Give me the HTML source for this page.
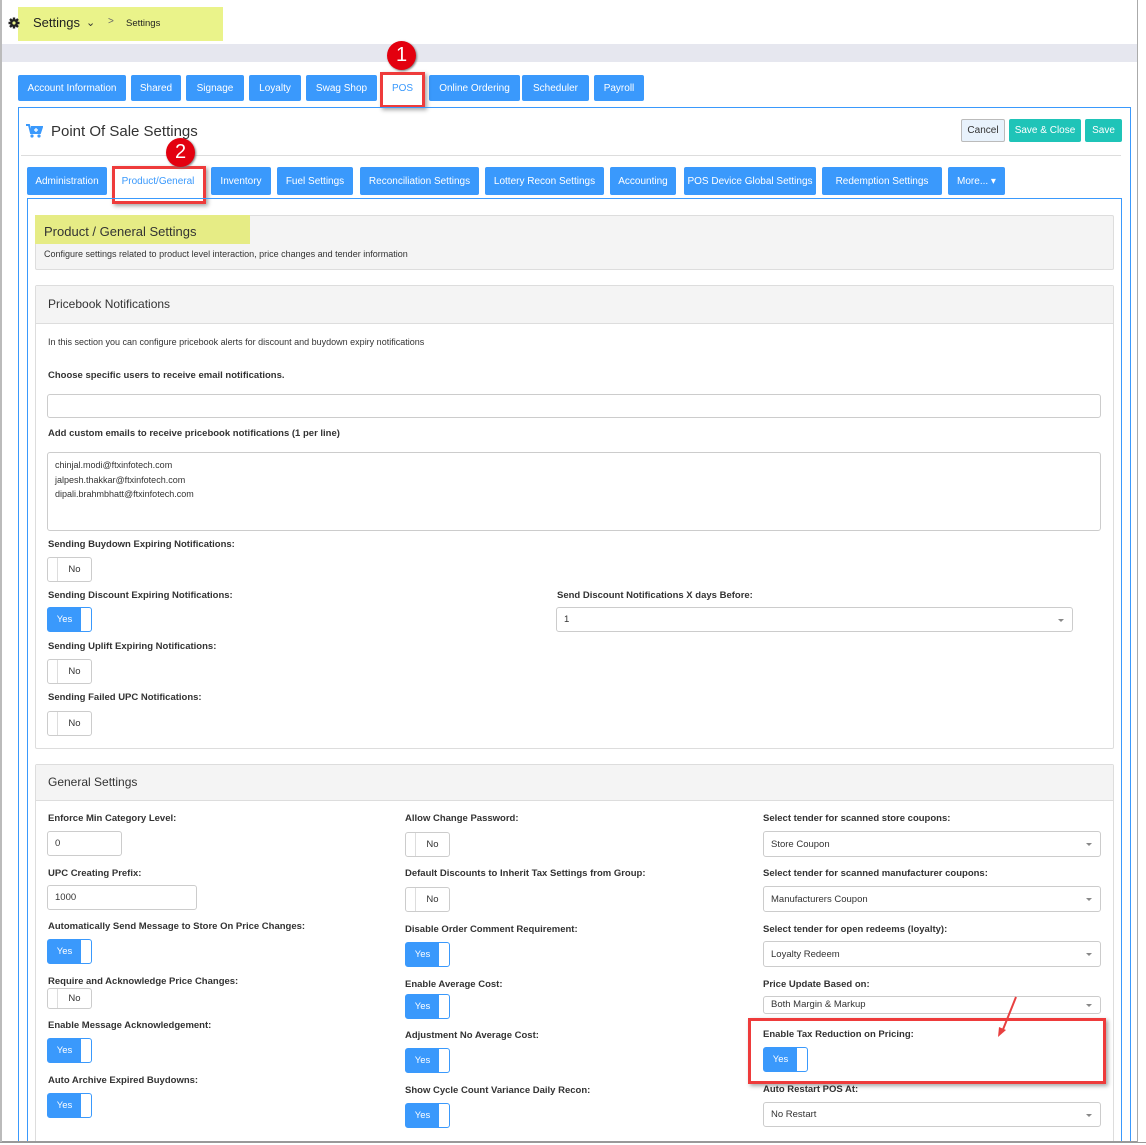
<!DOCTYPE html>
<html><head><meta charset="utf-8"><style>
*{box-sizing:border-box;margin:0;padding:0}
html,body{width:1146px;height:1145px;overflow:hidden}
body{background:#fff;font-family:"Liberation Sans",sans-serif;color:#333}
#w{position:relative;width:1146px;height:1145px;overflow:hidden}
.a{position:absolute}
.btn{position:absolute;background:#3a99fc;color:#fff;font-size:10px;border-radius:2px;display:flex;align-items:center;justify-content:center;white-space:nowrap}
.lbl{position:absolute;font-size:9.5px;font-weight:bold;color:#333;white-space:nowrap}
.in{position:absolute;border:1px solid #ccc;border-radius:3px;background:#fff;font-size:9.5px;color:#333;display:flex;align-items:center;padding-left:7px}
.sel::after{content:"";position:absolute;right:8px;top:50%;margin-top:-1px;border:3px solid transparent;border-top:3px solid #888}
.tn{position:absolute;width:45px;height:25px;border:1px solid #ccc;border-radius:3px;background:#fff;font-size:9.5px}
.tn::before{content:"";position:absolute;left:9px;top:0;bottom:0;border-left:1px solid #ddd}
.tn span{position:absolute;left:10px;right:0;top:0;bottom:0;display:flex;align-items:center;justify-content:center}
.ty{position:absolute;width:45px;height:25px;border:1px solid #3a99fc;border-radius:3px;background:#3a99fc;color:#fff;font-size:9.5px}
.ty span{position:absolute;left:0;right:10px;top:0;bottom:0;display:flex;align-items:center;justify-content:center}
.ty::after{content:"";position:absolute;right:0;top:0;bottom:0;width:10px;background:#fff;border-radius:0 2px 2px 0}
.panel{position:absolute;border:1px solid #ddd;border-radius:2px;background:#fff}
.ph{position:absolute;left:0;right:0;top:0;background:#f4f4f4;border-bottom:1px solid #ddd}
.badge{position:absolute;width:29px;height:29px;border-radius:50%;background:#e3000f;color:#fff;font-size:20px;display:flex;align-items:center;justify-content:center;box-shadow:1px 1px 2px #777}
.red{position:absolute;border:3px solid #ee3b3b;box-shadow:2px 2px 4px rgba(0,0,0,.35)}
</style></head><body><div id="w">
<div class="a" style="left:2px;top:44px;width:1136px;height:18px;background:#e6e7ef"></div>
<div class="a" style="left:18px;top:7px;width:205px;height:34px;background:#eaf38a"></div>
<svg class="a" style="left:8px;top:17px" width="12" height="12" viewBox="0 0 12 12"><circle cx="6" cy="6" r="4" fill="#222"/><g stroke="#222" stroke-width="2.4"><line x1="6" y1="0.5" x2="6" y2="11.5"/><line x1="0.5" y1="6" x2="11.5" y2="6"/><line x1="2" y1="2" x2="10" y2="10"/><line x1="10" y1="2" x2="2" y2="10"/></g><circle cx="6" cy="6" r="1.6" fill="#eaf38a"/></svg>
<div class="a" style="left:33px;top:15px;font-size:13px;color:#222">Settings</div>
<div class="a" style="left:86px;top:16px;font-size:11px;color:#333">⌄</div>
<div class="a" style="left:108px;top:16px;font-size:10px;color:#666">&gt;</div>
<div class="a" style="left:126px;top:18px;font-size:9.5px;color:#222">Settings</div>

<div class="btn" style="left:18px;top:75px;width:108px;height:26px">Account Information</div>
<div class="btn" style="left:131px;top:75px;width:50px;height:26px">Shared</div>
<div class="btn" style="left:186px;top:75px;width:58px;height:26px">Signage</div>
<div class="btn" style="left:249px;top:75px;width:52px;height:26px">Loyalty</div>
<div class="btn" style="left:306px;top:75px;width:71px;height:26px">Swag Shop</div>
<div class="btn" style="left:383px;top:75px;width:39px;height:26px;background:#fff;color:#3a99fc">POS</div>
<div class="btn" style="left:429px;top:75px;width:91px;height:26px">Online Ordering</div>
<div class="btn" style="left:522px;top:75px;width:67px;height:26px">Scheduler</div>
<div class="btn" style="left:594px;top:75px;width:50px;height:26px">Payroll</div>
<div class="red" style="left:380px;top:72px;width:45px;height:36px"></div>
<div class="badge" style="left:387px;top:41px">1</div>

<div class="a" style="left:18px;top:107px;width:1113px;height:1100px;border:1px solid #3a99fc"></div>
<svg class="a" style="left:26px;top:124px" width="17" height="14" viewBox="0 0 17 14"><path d="M0 1h3l2 8h9l2-6H5" fill="none" stroke="#3a99fc" stroke-width="2"/><rect x="5" y="3" width="10" height="6" fill="#3a99fc"/><circle cx="6" cy="12" r="1.6" fill="#3a99fc"/><circle cx="13" cy="12" r="1.6" fill="#3a99fc"/><path d="M10 4v4M8 6h4" stroke="#fff" stroke-width="1.2"/></svg>
<div class="a" style="left:51px;top:123px;font-size:15px;color:#333">Point Of Sale Settings</div>
<div class="btn" style="left:961px;top:119px;width:44px;height:23px;background:#e8f2fc;color:#333;border:1px solid #bbb">Cancel</div>
<div class="btn" style="left:1009px;top:119px;width:72px;height:23px;background:#1fc4b8">Save &amp; Close</div>
<div class="btn" style="left:1085px;top:119px;width:37px;height:23px;background:#1fc4b8">Save</div>
<div class="a" style="left:21px;top:155px;width:1100px;height:1px;background:#ddd"></div>

<div class="btn" style="left:27px;top:167px;width:80px;height:28px">Administration</div>
<div class="btn" style="left:115px;top:167px;width:86px;height:28px;background:#fff;color:#3a99fc">Product/General</div>
<div class="btn" style="left:211px;top:167px;width:60px;height:28px">Inventory</div>
<div class="btn" style="left:277px;top:167px;width:76px;height:28px">Fuel Settings</div>
<div class="btn" style="left:360px;top:167px;width:119px;height:28px">Reconciliation Settings</div>
<div class="btn" style="left:485px;top:167px;width:119px;height:28px">Lottery Recon Settings</div>
<div class="btn" style="left:610px;top:167px;width:66px;height:28px">Accounting</div>
<div class="btn" style="left:684px;top:167px;width:132px;height:28px">POS Device Global Settings</div>
<div class="btn" style="left:822px;top:167px;width:120px;height:28px">Redemption Settings</div>
<div class="btn" style="left:948px;top:167px;width:57px;height:28px">More... ▾</div>
<div class="red" style="left:112px;top:166px;width:94px;height:38px"></div>
<div class="badge" style="left:166px;top:138px">2</div>

<div class="a" style="left:27px;top:198px;width:1095px;height:1100px;border:1px solid #3a99fc"></div>

<div class="panel" style="left:35px;top:215px;width:1079px;height:55px;background:#f4f4f4"></div>
<div class="a" style="left:35px;top:215px;width:215px;height:29px;background:#e6ec85"></div>
<div class="a" style="left:44px;top:224px;font-size:13px;color:#333">Product / General Settings</div>
<div class="a" style="left:44px;top:249px;font-size:9px;color:#333">Configure settings related to product level interaction, price changes and tender information</div>

<div class="panel" style="left:35px;top:285px;width:1079px;height:464px"><div class="ph" style="height:38px"></div></div>
<div class="a" style="left:48px;top:297px;font-size:12px;color:#333">Pricebook Notifications</div>
<div class="a" style="left:48px;top:337px;font-size:9px">In this section you can configure pricebook alerts for discount and buydown expiry notifications</div>
<div class="lbl" style="left:48px;top:370px">Choose specific users to receive email notifications.</div>
<div class="in" style="left:47px;top:394px;width:1054px;height:24px"></div>
<div class="lbl" style="left:48px;top:428px">Add custom emails to receive pricebook notifications (1 per line)</div>
<div class="in" style="left:47px;top:452px;width:1054px;height:79px;align-items:flex-start;padding-top:5px;font-size:9px;line-height:14.5px">chinjal.modi@ftxinfotech.com<br>jalpesh.thakkar@ftxinfotech.com<br>dipali.brahmbhatt@ftxinfotech.com</div>
<div class="lbl" style="left:48px;top:539px">Sending Buydown Expiring Notifications:</div>
<div class="tn" style="left:47px;top:557px"><span>No</span></div>
<div class="lbl" style="left:48px;top:590px">Sending Discount Expiring Notifications:</div>
<div class="ty" style="left:47px;top:607px"><span>Yes</span></div>
<div class="lbl" style="left:557px;top:590px">Send Discount Notifications X days Before:</div>
<div class="in sel" style="left:556px;top:607px;width:517px;height:25px">1</div>
<div class="lbl" style="left:48px;top:641px">Sending Uplift Expiring Notifications:</div>
<div class="tn" style="left:47px;top:659px"><span>No</span></div>
<div class="lbl" style="left:48px;top:692px">Sending Failed UPC Notifications:</div>
<div class="tn" style="left:47px;top:711px"><span>No</span></div>

<div class="panel" style="left:35px;top:764px;width:1079px;height:500px"><div class="ph" style="height:36px"></div></div>
<div class="a" style="left:48px;top:775px;font-size:12px;color:#333">General Settings</div>

<div class="lbl" style="left:48px;top:813px">Enforce Min Category Level:</div>
<div class="in" style="left:47px;top:831px;width:75px;height:25px">0</div>
<div class="lbl" style="left:48px;top:868px">UPC Creating Prefix:</div>
<div class="in" style="left:47px;top:885px;width:150px;height:25px">1000</div>
<div class="lbl" style="left:48px;top:921px">Automatically Send Message to Store On Price Changes:</div>
<div class="ty" style="left:47px;top:939px"><span>Yes</span></div>
<div class="lbl" style="left:48px;top:976px">Require and Acknowledge Price Changes:</div>
<div class="tn" style="left:47px;top:988px;height:21px"><span>No</span></div>
<div class="lbl" style="left:48px;top:1020px">Enable Message Acknowledgement:</div>
<div class="ty" style="left:47px;top:1038px"><span>Yes</span></div>
<div class="lbl" style="left:48px;top:1075px">Auto Archive Expired Buydowns:</div>
<div class="ty" style="left:47px;top:1093px"><span>Yes</span></div>

<div class="lbl" style="left:405px;top:813px">Allow Change Password:</div>
<div class="tn" style="left:405px;top:832px"><span>No</span></div>
<div class="lbl" style="left:405px;top:868px">Default Discounts to Inherit Tax Settings from Group:</div>
<div class="tn" style="left:405px;top:887px"><span>No</span></div>
<div class="lbl" style="left:405px;top:924px">Disable Order Comment Requirement:</div>
<div class="ty" style="left:405px;top:942px"><span>Yes</span></div>
<div class="lbl" style="left:405px;top:979px">Enable Average Cost:</div>
<div class="ty" style="left:405px;top:994px"><span>Yes</span></div>
<div class="lbl" style="left:405px;top:1030px">Adjustment No Average Cost:</div>
<div class="ty" style="left:405px;top:1048px"><span>Yes</span></div>
<div class="lbl" style="left:405px;top:1085px">Show Cycle Count Variance Daily Recon:</div>
<div class="ty" style="left:405px;top:1103px"><span>Yes</span></div>

<div class="lbl" style="left:763px;top:813px">Select tender for scanned store coupons:</div>
<div class="in sel" style="left:763px;top:831px;width:338px;height:26px">Store Coupon</div>
<div class="lbl" style="left:763px;top:868px">Select tender for scanned manufacturer coupons:</div>
<div class="in sel" style="left:763px;top:886px;width:338px;height:26px">Manufacturers Coupon</div>
<div class="lbl" style="left:763px;top:924px">Select tender for open redeems (loyalty):</div>
<div class="in sel" style="left:763px;top:941px;width:338px;height:26px">Loyalty Redeem</div>
<div class="lbl" style="left:763px;top:979px">Price Update Based on:</div>
<div class="in sel" style="left:763px;top:996px;width:338px;height:18px;align-items:flex-start;padding-top:2px">Both Margin &amp; Markup</div>
<div class="lbl" style="left:763px;top:1029px">Enable Tax Reduction on Pricing:</div>
<div class="ty" style="left:763px;top:1047px"><span>Yes</span></div>
<div class="lbl" style="left:763px;top:1084px">Auto Restart POS At:</div>
<div class="in sel" style="left:763px;top:1102px;width:338px;height:25px">No Restart</div>
<div class="red" style="left:748px;top:1018px;width:358px;height:66px"></div>
<svg class="a" style="left:995px;top:994px" width="25" height="46" viewBox="0 0 25 46"><line x1="21" y1="3" x2="7" y2="38" stroke="#e84040" stroke-width="2"/><path d="M3 43l1-10 7 3z" fill="#e84040"/></svg>

<div class="a" style="left:0;top:1141px;width:1146px;height:4px;background:#fff;border-top:2px solid #999"></div>
<div class="a" style="left:1137px;top:0;width:9px;height:1142px;background:#fff;border-left:1px solid #aaa"></div>
<div class="a" style="left:0;top:0;width:2px;height:1142px;background:#bbb"></div>
</div></body></html>
